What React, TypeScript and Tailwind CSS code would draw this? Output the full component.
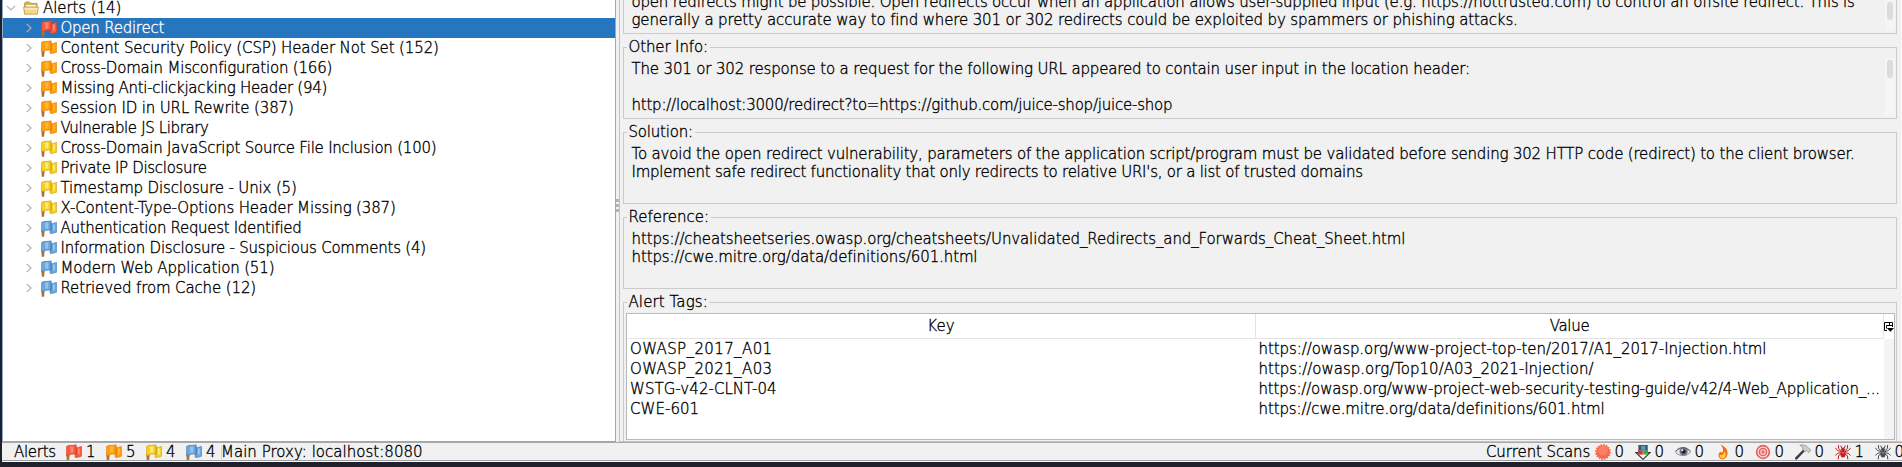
import type { ReactNode } from "react";

type Level = "high" | "medium" | "low" | "info";

const flagColors: Record<Level, { base: string; light: string; dark: string }> = {
  high: { base: "#fb5a41", light: "#ff9480", dark: "#dd3a22" },
  medium: { base: "#ff9d0b", light: "#ffc04a", dark: "#e57c00" },
  low: { base: "#f6d021", light: "#fff09a", dark: "#cf9b0a" },
  info: { base: "#6ba6dc", light: "#a5cdf0", dark: "#3f7ab8" },
};

function Flag({ level }: { level: Level }) {
  const c = flagColors[level];
  return (
    <svg viewBox="0 0 17 17" preserveAspectRatio="none" className="h-[17px] w-4 shrink-0">
      <path d="M0.4 9 L0.8 16.8 L3.2 16.8 L4 10Z" fill="#a8713a" />
      <path d="M10 3.6 C12 4.4 13.5 2.8 16.6 2.4 L16.6 12.2 C14.2 12.4 12.6 14.2 9.6 13.2Z" fill={c.base} stroke={c.dark} strokeWidth="0.6" />
      <path d="M0.6 2.4 C3 0.6 6 2 10.8 0.8 L11.2 9.6 C8 10.8 5.6 9.4 3.4 11 L0.6 12Z" fill={c.base} stroke={c.dark} strokeWidth="0.6" />
      <path d="M4.4 2.6 L7.8 2.6 L7.8 8.6 L4.6 8.8Z" fill={c.light} opacity="0.75" />
      <path d="M12.8 4.8 L14.6 4.2 L14.6 10 L12.8 10.8Z" fill={c.light} opacity="0.9" />
      <path d="M9.8 1.6 L11.4 2.6 L11.2 11 L9.6 12.8Z" fill={c.dark} opacity="0.5" />
    </svg>
  );
}

function Folder() {
  return (
    <svg viewBox="0 0 16 14" className="h-[14px] w-[16px] shrink-0">
      <path d="M1.5 12 V2.2 L2.5 1 H6.5 L7.5 2.4 H14 V12Z" fill="#d9b45a" stroke="#b8913c" strokeWidth="0.8" />
      <path d="M3 4 H13 V7 H3Z" fill="#fbf6e4" />
      <path d="M0.6 6 H15.4 L14.4 13.2 H1.6Z" fill="#f3d88c" stroke="#c29b45" strokeWidth="0.8" />
      <path d="M1.6 7 H14.4 L14.2 8.8 H1.8Z" fill="#faeab8" />
    </svg>
  );
}

function Chevron({ open }: { open?: boolean }) {
  return open ? (
    <svg viewBox="0 0 10 6" className="h-[6px] w-[10px] shrink-0" fill="none" stroke="#b2b2b2" strokeWidth="1.2">
      <path d="M0.8 0.8 L5 5 L9.2 0.8" />
    </svg>
  ) : (
    <svg viewBox="0 0 6 10" className="h-[10px] w-[6px] shrink-0" fill="none" stroke="#b2b2b2" strokeWidth="1.2">
      <path d="M0.8 0.8 L5 5 L0.8 9.2" />
    </svg>
  );
}

const alerts: { label: string; level: Level; spacing: string }[] = [
  { label: "Open Redirect", level: "high", spacing: "tracking-[-0.24px]" },
  { label: "Content Security Policy (CSP) Header Not Set (152)", level: "medium", spacing: "tracking-[-0.121px]" },
  { label: "Cross-Domain Misconfiguration (166)", level: "medium", spacing: "tracking-[-0.196px]" },
  { label: "Missing Anti-clickjacking Header (94)", level: "medium", spacing: "tracking-[-0.28px]" },
  { label: "Session ID in URL Rewrite (387)", level: "medium", spacing: "tracking-[-0.138px]" },
  { label: "Vulnerable JS Library", level: "medium", spacing: "tracking-[-0.37px]" },
  { label: "Cross-Domain JavaScript Source File Inclusion (100)", level: "low", spacing: "tracking-[-0.222px]" },
  { label: "Private IP Disclosure", level: "low", spacing: "tracking-[-0.32px]" },
  { label: "Timestamp Disclosure - Unix (5)", level: "low", spacing: "tracking-[-0.138px]" },
  { label: "X-Content-Type-Options Header Missing (387)", level: "low", spacing: "tracking-[-0.145px]" },
  { label: "Authentication Request Identified", level: "info", spacing: "tracking-[-0.32px]" },
  { label: "Information Disclosure - Suspicious Comments (4)", level: "info", spacing: "tracking-[-0.212px]" },
  { label: "Modern Web Application (51)", level: "info", spacing: "tracking-[-0.15px]" },
  { label: "Retrieved from Cache (12)", level: "info", spacing: "tracking-[-0.127px]" },
];

function AlertTree() {
  return (
    <div className="flex w-[614px] shrink-0 flex-col overflow-hidden border-x border-b border-[#8eaad2] bg-white">
      <div className="-mt-[2px] flex h-5 shrink-0 items-center pl-[3px]">
        <Chevron open />
        <span className="ml-[7px] flex">
          <Folder />
        </span>
        <span className="ml-[4px] tracking-[-0.073px]">Alerts (14)</span>
      </div>
      {alerts.map((a, i) => (
        <div key={a.label} className={i === 0 ? "flex h-5 shrink-0 items-center bg-[#2675bf] pl-[22.5px] text-white [-webkit-text-stroke-color:white]" : "flex h-5 shrink-0 items-center pl-[22.5px]"}>
          <Chevron />
          <span className="mr-[3.5px] ml-[9.5px] flex">
            <Flag level={a.level} />
          </span>
          <span className={a.spacing}>{a.label}</span>
        </div>
      ))}
    </div>
  );
}

function Section({ title, spacing, thumb, children }: { title: string; spacing: string; thumb?: string; children: ReactNode }) {
  return (
    <fieldset className="mb-1 h-[81px] min-w-0 shrink-0 border border-[#cbcbcb]">
      <legend className="ml-[3px] h-[18px] pr-[2px] pl-[1.5px]">
        <span className={spacing}>{title}</span>
      </legend>
      <div className="flex justify-between pr-[1px]">
        <div className="mt-[4px] ml-[7.5px]">{children}</div>
        {thumb && (
          <div className="mt-[2px] h-[58px] w-[10px] bg-[#f5f5f5] px-[2px] pt-[2px]">
            <div className={thumb} />
          </div>
        )}
      </div>
    </fieldset>
  );
}

const tags = [
  { key: "OWASP_2017_A01", ks: "tracking-[0.38px]", value: "https://owasp.org/www-project-top-ten/2017/A1_2017-Injection.html", vs: "tracking-[-0.068px]" },
  { key: "OWASP_2021_A03", ks: "tracking-[0.38px]", value: "https://owasp.org/Top10/A03_2021-Injection/", vs: "tracking-[0.004px]" },
  { key: "WSTG-v42-CLNT-04", ks: "tracking-[0.045px]", value: "https://owasp.org/www-project-web-security-testing-guide/v42/4-Web_Application_...", vs: "tracking-[-0.145px]" },
  { key: "CWE-601", ks: "tracking-[0.053px]", value: "https://cwe.mitre.org/data/definitions/601.html", vs: "tracking-[-0.12px]" },
];

function ColumnControl() {
  return (
    <svg viewBox="0 0 10 10" className="h-[10px] w-[10px] shrink-0" fill="none" stroke="#000" strokeWidth="1">
      <path d="M3 8.5 H0.5 V0.5 H8.5 V5 M2.5 6.5 V3.5 H8.5 M5.5 0.5 V3.5" />
      <path d="M2.8 6 H10 L6.4 9.8Z" fill="#000" stroke="none" />
    </svg>
  );
}

function TagTable() {
  return (
    <div className="mt-[2px] ml-[2px] flex h-[127px] w-[1269px] flex-col border border-[#b9b9b9] bg-white">
      <div className="flex h-[25px] shrink-0 leading-6">
        <div className="w-[629px] border-r border-b border-[#e3e3e3] text-center">
          <span className="tracking-[0.1px]">Key</span>
        </div>
        <div className="w-[628px] border-r border-b border-[#e3e3e3] text-center">
          <span className="tracking-[-0.3px]">Value</span>
        </div>
        <div className="flex flex-1 items-center">
          <ColumnControl />
        </div>
      </div>
      <div className="flex flex-1">
        <div className="w-[1257px] leading-5">
          {tags.map((t) => (
            <div key={t.key} className="flex h-5">
              <div className="w-[629px] pl-[3px]">
                <span className={t.ks}>{t.key}</span>
              </div>
              <div className="pl-[2.5px]">
                <span className={t.vs}>{t.value}</span>
              </div>
            </div>
          ))}
        </div>
        <div className="flex-1 bg-[#f4f4f4]" />
      </div>
    </div>
  );
}

function Details() {
  return (
    <div className="flex min-w-0 flex-1 overflow-hidden border-b border-l border-[#c4c4c4] pl-[3px]">
      <div className="-mt-[47px] flex w-[1274px] shrink-0 flex-col">
        <Section title="Description:" spacing="tracking-[-0.1px]" thumb="mt-[27px] h-[18px] rounded-full bg-[#dcdcdc]">
          <div className="h-[18px]" />
          <div className="tracking-[-0.203px]">open redirects might be possible. Open redirects occur when an application allows user-supplied input (e.g. https://nottrusted.com) to control an offsite redirect. This is</div>
          <div className="tracking-[-0.142px]">generally a pretty accurate way to find where 301 or 302 redirects could be exploited by spammers or phishing attacks.</div>
        </Section>
        <Section title="Other Info:" spacing="tracking-[-0.125px]" thumb="h-[18px] rounded-full bg-[#dcdcdc]">
          <div className="tracking-[-0.155px]">The 301 or 302 response to a request for the following URL appeared to contain user input in the location header:</div>
          <div className="h-[18px]" />
          <div className="tracking-[-0.217px]">http://localhost:3000/redirect?to=https://github.com/juice-shop/juice-shop</div>
        </Section>
        <Section title="Solution:" spacing="tracking-[-0.2px]">
          <div className="tracking-[-0.186px]">To avoid the open redirect vulnerability, parameters of the application script/program must be validated before sending 302 HTTP code (redirect) to the client browser.</div>
          <div className="tracking-[-0.243px]">Implement safe redirect functionality that only redirects to relative URI's, or a list of trusted domains</div>
        </Section>
        <Section title="Reference:" spacing="tracking-[-0.004px]">
          <div className="tracking-[-0.119px]">https://cheatsheetseries.owasp.org/cheatsheets/Unvalidated_Redirects_and_Forwards_Cheat_Sheet.html</div>
          <div className="tracking-[-0.125px]">https://cwe.mitre.org/data/definitions/601.html</div>
        </Section>
        <fieldset className="h-[148px] min-w-0 shrink-0 border-x border-t border-[#cbcbcb]">
          <legend className="ml-[3px] h-[18px] pr-[2px] pl-[1.5px]">
            <span className="tracking-[0.1px]">Alert Tags:</span>
          </legend>
          <TagTable />
        </fieldset>
      </div>
      <div className="ml-auto w-px bg-[#f9f9f9]" />
    </div>
  );
}

const icon = "h-4 w-4 shrink-0";

function SunIcon() {
  return (
    <svg viewBox="0 0 16 16" className={icon}>
      <circle cx="8" cy="8" r="7" fill="none" stroke="#f4674a" strokeWidth="1.8" strokeDasharray="1.6 1.15" />
      <circle cx="8" cy="8" r="6.8" fill="#f8694b" />
      <circle cx="8" cy="6.8" r="4.8" fill="#ff8a6c" opacity="0.7" />
    </svg>
  );
}

function DownloadIcon() {
  return (
    <svg viewBox="0 0 16 16" className={icon}>
      <path d="M4 1.5 H12 V8.5 H15.2 L8 15.4 L0.8 8.5 H4Z" fill="#f8f8f8" stroke="#333" strokeWidth="1.1" />
      <rect x="4" y="1" width="8.2" height="5.6" fill="#4a5560" />
      <rect x="6.2" y="2" width="4" height="3.8" fill="#3aa5e2" />
      <rect x="3.2" y="6.6" width="4.6" height="4" fill="#dd2f3a" />
      <rect x="8.2" y="6.6" width="4.6" height="4" fill="#35ad4a" />
    </svg>
  );
}

function EyeIcon() {
  return (
    <svg viewBox="0 0 16 16" className={icon}>
      <path d="M0.4 8.2 C3 3.6 11.6 2.4 15.6 8 C12.4 12.8 4 12.8 0.4 8.2Z" fill="#e4e4ea" stroke="#8c8c94" strokeWidth="0.9" />
      <circle cx="8.6" cy="7.6" r="4" fill="#6f7486" />
      <circle cx="8.6" cy="7.6" r="2.1" fill="#1d1f26" />
      <circle cx="7.3" cy="6.2" r="1" fill="#fff" />
      <path d="M0.6 7.2 C4 2.6 11.6 2 15.6 7.4" fill="none" stroke="#55555c" strokeWidth="0.9" />
    </svg>
  );
}

function FlameIcon() {
  return (
    <svg viewBox="0 0 16 16" className={icon}>
      <path d="M5.4 0.6 C10 2.4 13.4 6 12.4 10.6 C11.8 13.8 9.6 15.4 7.6 15.4 C5 15.4 3.4 13.2 3.6 10.8 C3.8 9 5 8.2 5.6 7.4 C6.2 9 7.2 8.8 7.8 7.8 C8.8 5.6 7.4 2.8 5.4 0.6Z" fill="#f26a1b" />
      <path d="M9.8 6.4 C11.4 9.6 10.8 14.2 7.8 14.6 C5.2 14.6 4.4 12.4 4.8 10.4 C6.6 12 9.4 10.2 9.8 6.4Z" fill="#ffd23c" />
    </svg>
  );
}

function TargetIcon() {
  return (
    <svg viewBox="0 0 16 16" className={icon}>
      <circle cx="8" cy="8" r="7.2" fill="#ea5f5f" />
      <circle cx="8" cy="8" r="4.9" fill="none" stroke="#fbdcdc" strokeWidth="1.2" />
      <circle cx="8" cy="8" r="2.3" fill="#ee6a6a" stroke="#fbdcdc" strokeWidth="1.1" />
    </svg>
  );
}

function HammerIcon() {
  return (
    <svg viewBox="0 0 16 16" className={icon}>
      <path d="M1.2 14.4 L9.4 6" stroke="#3b3b3b" strokeWidth="2.4" strokeLinecap="round" />
      <path d="M4.8 1.4 C8 0.4 11 1 12.8 3.4 L15.8 6 L14 8.6 L11.6 6.6 L9.8 7.6 L7.8 5.4 C8.4 3.4 7 2.2 4.8 1.4Z" fill="#cfcfcf" stroke="#8f8f8f" strokeWidth="0.8" />
    </svg>
  );
}

function SpiderIcon({ color }: { color: string }) {
  return (
    <svg viewBox="0 0 16 16" className={icon}>
      <g fill="none" stroke={color} strokeWidth="1">
        <path d="M6.5 7 L3.6 4.6 L3.4 1 M9.5 7 L12.4 4.6 L12.6 1" />
        <path d="M6 7.6 L2.6 6.6 L0.4 3.8 M10 7.6 L13.4 6.6 L15.6 3.8" />
        <path d="M6 9 L2.8 9.2 L0.4 11.4 M10 9 L13.2 9.2 L15.6 11.4" />
        <path d="M6.4 10 L3.6 11.6 L3.2 15.4 M9.6 10 L12.4 11.6 L12.8 15.4" />
        <path d="M6.6 4 L5.8 1.6 M9.4 4 L10.2 1.6" />
      </g>
      <ellipse cx="8" cy="5.4" rx="1.9" ry="2" fill={color} />
      <ellipse cx="8" cy="10" rx="2.5" ry="3.6" fill={color} />
      <circle cx="8" cy="8.8" r="0.9" fill="#fff" opacity="0.45" />
    </svg>
  );
}

const scans: { name: string; icon: ReactNode; count: number }[] = [
  { name: "sun", icon: <SunIcon />, count: 0 },
  { name: "download", icon: <DownloadIcon />, count: 0 },
  { name: "eye", icon: <EyeIcon />, count: 0 },
  { name: "flame", icon: <FlameIcon />, count: 0 },
  { name: "target", icon: <TargetIcon />, count: 0 },
  { name: "hammer", icon: <HammerIcon />, count: 0 },
  { name: "spider", icon: <SpiderIcon color="#c81e1e" />, count: 1 },
  { name: "ajax-spider", icon: <SpiderIcon color="#4a4e50" />, count: 0 },
];

const totals: { level: Level; count: number }[] = [
  { level: "high", count: 1 },
  { level: "medium", count: 5 },
  { level: "low", count: 4 },
  { level: "info", count: 4 },
];

function StatusBar() {
  return (
    <div className="flex h-[19px] shrink-0 overflow-hidden border-t border-b border-t-[#a9a9a9] border-b-[#a0a0a0]">
      <span className="ml-[12px] w-[52px] shrink-0 tracking-[-0.28px]">Alerts</span>
      {totals.map((t) => (
        <span key={t.level} className="flex h-[18px] w-10 shrink-0 items-center">
          <Flag level={t.level} />
          <span className="ml-[4px]">{t.count}</span>
        </span>
      ))}
      <span className="-ml-[5px] flex shrink-0">
        <span className="mt-[3px] h-[13px] w-px bg-[#d4d4d4]" />
        <span className="-ml-[1px] tracking-[0.024px]">Main Proxy: localhost:8080</span>
      </span>
      <span className="ml-auto w-[109px] shrink-0 tracking-[-0.11px]">Current Scans</span>
      <div className="flex w-[307px] shrink-0">
        {scans.map((s) => (
          <span key={s.name} className="flex h-[18px] w-10 shrink-0 items-center">
            {s.icon}
            <span className="ml-[3.5px]">{s.count}</span>
          </span>
        ))}
      </div>
    </div>
  );
}

export default function App() {
  return (
    <div className="flex h-[467px] w-[1902px] flex-col overflow-hidden bg-[#1e212c] pl-[2px] font-['DejaVu_Sans',sans-serif] text-[15px] leading-[18px] font-extralight whitespace-nowrap text-black [-webkit-text-stroke:0.35px_black]">
      <div className="flex h-[442px] shrink-0 bg-[#f1f1f1]">
        <AlertTree />
        <div className="flex w-[3px] shrink-0 flex-col items-center justify-start gap-[2px] pt-[199px]">
          <span className="h-[3px] w-[3px] bg-[#b4b4b4]" />
          <span className="h-[3px] w-[3px] bg-[#b4b4b4]" />
          <span className="h-[3px] w-[3px] bg-[#b4b4b4]" />
        </div>
        <Details />
      </div>
      <div className="shrink-0 border-b border-white bg-[#f1f1f1]">
        <StatusBar />
      </div>
    </div>
  );
}
